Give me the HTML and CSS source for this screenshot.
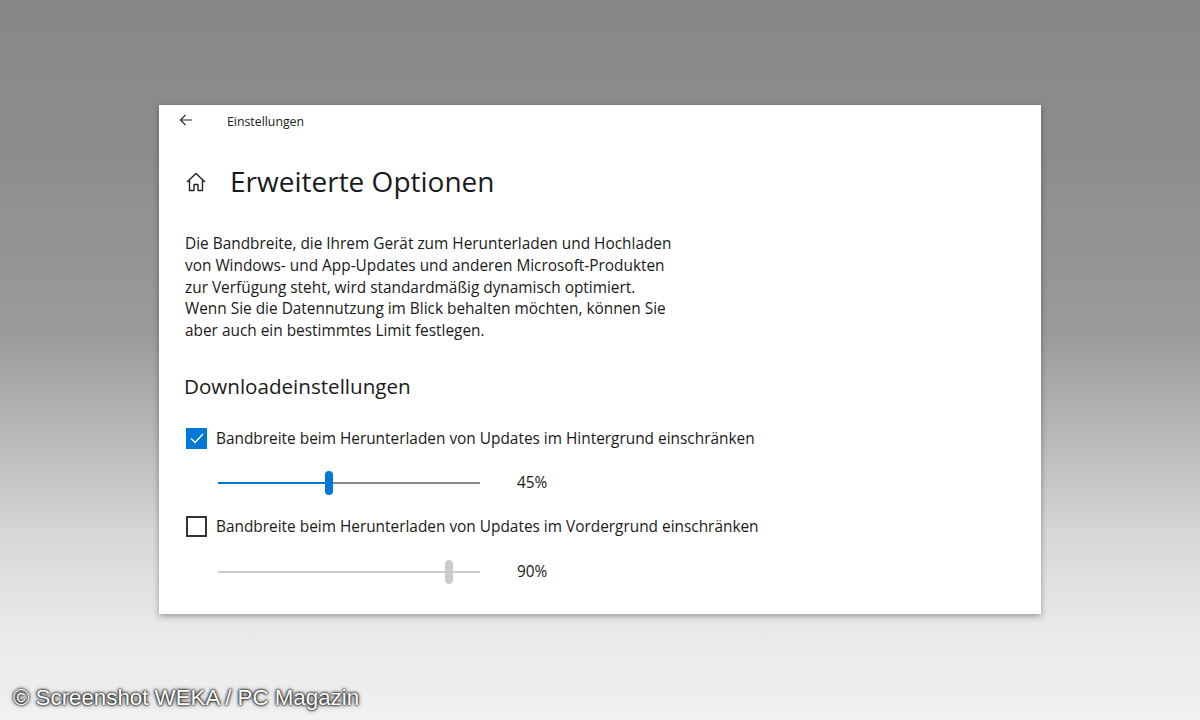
FILE: index.html
```html
<!DOCTYPE html>
<html lang="de">
<head>
<meta charset="utf-8">
<title>Erweiterte Optionen</title>
<link rel="stylesheet" href="styles.css">
</head>
<body>
<div class="window">
  <div class="titlebar">
    <svg class="back" width="14" height="12" viewBox="0 0 14 12"><path d="M13 6H1.5M6.5 1L1.5 6l5 5" fill="none" stroke="#222" stroke-width="1.1"/></svg>
    <span class="apptitle">Einstellungen</span>
  </div>
  <div class="content">
    <div class="pagehead">
      <svg class="home" width="22" height="20" viewBox="0 0 22 20"><path d="M2 10L11 1.5 20 10M4.5 7.8V18.5H9V12.5H13V18.5H17.5V7.8" fill="none" stroke="#222" stroke-width="1.4" stroke-linejoin="round"/></svg>
      <h1>Erweiterte Optionen</h1>
    </div>
    <p class="desc">Die Bandbreite, die Ihrem Gerät zum Herunterladen und Hochladen<br>von Windows- und App-Updates und anderen Microsoft-Produkten<br>zur Verfügung steht, wird standardmäßig dynamisch optimiert.<br>Wenn Sie die Datennutzung im Blick behalten möchten, können Sie<br>aber auch ein bestimmtes Limit festlegen.</p>
    <h2>Downloadeinstellungen</h2>
    <div class="option">
      <span class="box checked"><svg width="14" height="11" viewBox="0 0 14 11"><path d="M1 5.5L5 9.5 13 1" fill="none" stroke="#fff" stroke-width="1.5"/></svg></span>
      <span class="label">Bandbreite beim Herunterladen von Updates im Hintergrund einschränken</span>
    </div>
    <div class="sliderrow">
      <div class="slider active">
        <div class="fill" style="width:111px"></div>
        <div class="thumb" style="left:107px"></div>
      </div>
      <span class="value">45%</span>
    </div>
    <div class="option">
      <span class="box"></span>
      <span class="label">Bandbreite beim Herunterladen von Updates im Vordergrund einschränken</span>
    </div>
    <div class="sliderrow last">
      <div class="slider disabled">
        <div class="thumb" style="left:227px"></div>
      </div>
      <span class="value">90%</span>
    </div>
  </div>
</div>
<div class="watermark">© Screenshot WEKA / PC Magazin</div>
</body>
</html>
```
FILE: styles.css
```css
html, body {
  margin: 0;
  padding: 0;
}
body {
  width: 1200px;
  height: 720px;
  overflow: hidden;
  position: relative;
  font-family: "Open Sans", "Noto Sans", sans-serif;
  color: #1a1a1a;
  background: linear-gradient(to bottom, #878787 0px, #8d8d8d 150px, #9a9a9a 330px, #b6b6b6 430px, #d6d6d6 530px, #e8e8e8 620px, #f1f1f1 720px);
  padding-top: 105px;
  box-sizing: border-box;
}
.window {
  margin-left: 159px;
  width: 882px;
  height: 509px;
  background: #fff;
  box-shadow: 0 2px 6px rgba(0,0,0,0.35);
  box-sizing: border-box;
}
.titlebar {
  height: 32px;
  display: flex;
  align-items: center;
  padding-left: 20px;
}
.back {
  display: block;
  margin-top: -3px;
}
.apptitle {
  margin-left: 34px;
  font-size: 12.3px;
  margin-top: 0;
}
.content {
  padding-left: 26px;
}
.pagehead {
  display: flex;
  align-items: center;
  height: 44px;
  margin-top: 22px;
}
.home {
  display: block;
  margin-right: 23px;
  margin-top: 1px;
}
h1 {
  margin: 0;
  font-weight: 400;
  font-size: 28px;
  color: #1a1a1a;
}
.desc {
  margin: 30px 0 0 0;
  font-size: 15.4px;
  line-height: 21.8px;
}
h2 {
  margin: 30px 0 0 -1px;
  font-weight: 400;
  font-size: 20.6px;
  line-height: 28px;
}
.option {
  display: flex;
  align-items: center;
  margin-top: 28px;
  height: 22px;
}
.sliderrow + .option {
  margin-top: 11px;
}
.box {
  width: 21px;
  height: 21px;
  box-sizing: border-box;
  border: 2px solid #333;
  display: flex;
  align-items: center;
  justify-content: center;
  margin-left: 1px;
}
.box.checked {
  background: #0078d7;
  border-color: #0078d7;
}
.label {
  margin-left: 9px;
  font-size: 15.4px;
}
.sliderrow {
  display: flex;
  align-items: center;
  height: 44px;
  margin-top: 11px;
  padding-left: 33px;
}
.sliderrow.last {
  margin-top: 12px;
}
.slider {
  position: relative;
  width: 262px;
  height: 2px;
}
.slider.active {
  background: #8a8a8a;
}
.slider.disabled {
  background: #cccccc;
}
.fill {
  position: absolute;
  left: 0;
  top: 0;
  height: 2px;
  background: #0078d7;
}
.thumb {
  position: absolute;
  top: -11px;
  width: 8px;
  height: 24px;
  border-radius: 4px;
}
.active .thumb {
  background: #0078d7;
}
.disabled .thumb {
  background: #cccccc;
}
.value {
  margin-left: 37px;
  font-size: 15.4px;
}
.watermark {
  position: absolute;
  left: 13px;
  top: 685px;
  font-family: "Liberation Sans", Arial, sans-serif;
  font-size: 22.3px;
  color: #fff;
  text-shadow: 0 0 2px #000, 0 0 3px #000, 0 0 5px rgba(0,0,0,0.6);
}
```
